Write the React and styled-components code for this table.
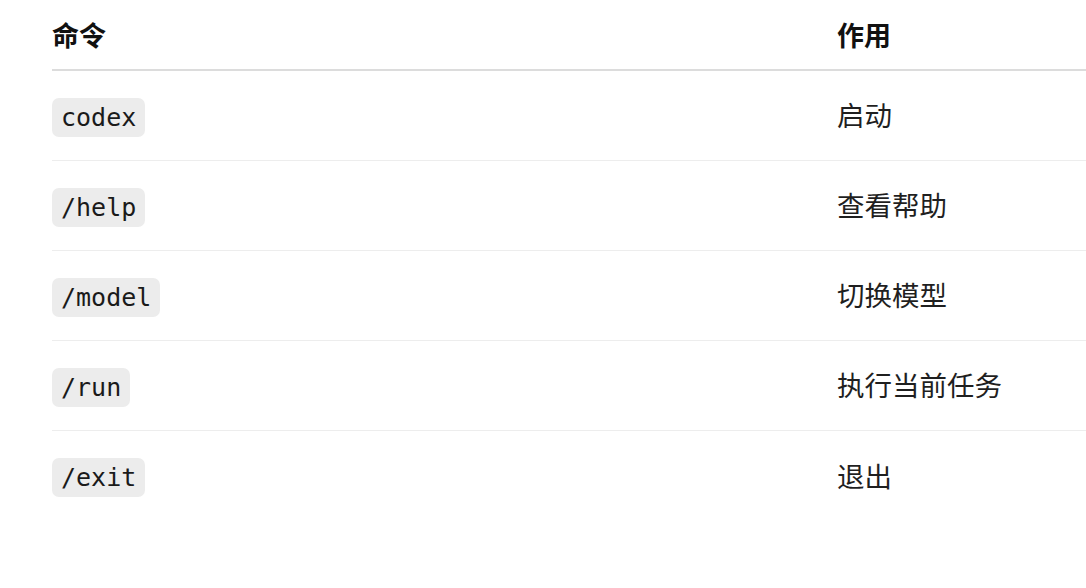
import styled, { createGlobalStyle } from "styled-components";

const Global = createGlobalStyle`
  body {
    margin: 0;
    background: #fff;
    overflow: hidden;
    font-family: "Noto Sans CJK SC", "Noto Sans", sans-serif;
    color: #1f1f1f;
  }
`;

const Table = styled.div`
  margin-left: 52px;
  width: 1034px;
  display: grid;
  grid-template-columns: 785px 1fr;
`;

const HeadCell = styled.div`
  height: 69px;
  display: flex;
  align-items: center;
  font-size: 27px;
  font-weight: 700;
  color: #111;
  border-bottom: 2px solid #dcdcdc;
`;

const Cell = styled.div`
  height: 90px;
  display: flex;
  align-items: center;
  font-size: 27.5px;
  padding: ${(p) => (p.$text ? "0 0 3px" : "3px 0 0")};
  box-sizing: border-box;
  border-bottom: ${(p) => (p.$last ? "none" : "1px solid #ededed")};
`;

const Code = styled.code`
  display: inline-block;
  box-sizing: border-box;
  height: 39px;
  font-family: "DejaVu Sans Mono", monospace;
  font-size: 25px;
  line-height: 29px;
  padding: 5px 9px;
  background: #ececec;
  border-radius: 7px;
  color: #1a1a1a;
`;

const rows = [
  ["codex", "启动"],
  ["/help", "查看帮助"],
  ["/model", "切换模型"],
  ["/run", "执行当前任务"],
  ["/exit", "退出"],
];

export default function App() {
  return (
    <>
      <Global />
      <Table>
        <HeadCell>命令</HeadCell>
        <HeadCell>作用</HeadCell>
        {rows.map(([cmd, desc], i) => {
          const last = i === rows.length - 1;
          return [
            <Cell key={cmd + "a"} $last={last}>
              <Code>{cmd}</Code>
            </Cell>,
            <Cell key={cmd + "b"} $last={last} $text>
              {desc}
            </Cell>,
          ];
        })}
      </Table>
    </>
  );
}
